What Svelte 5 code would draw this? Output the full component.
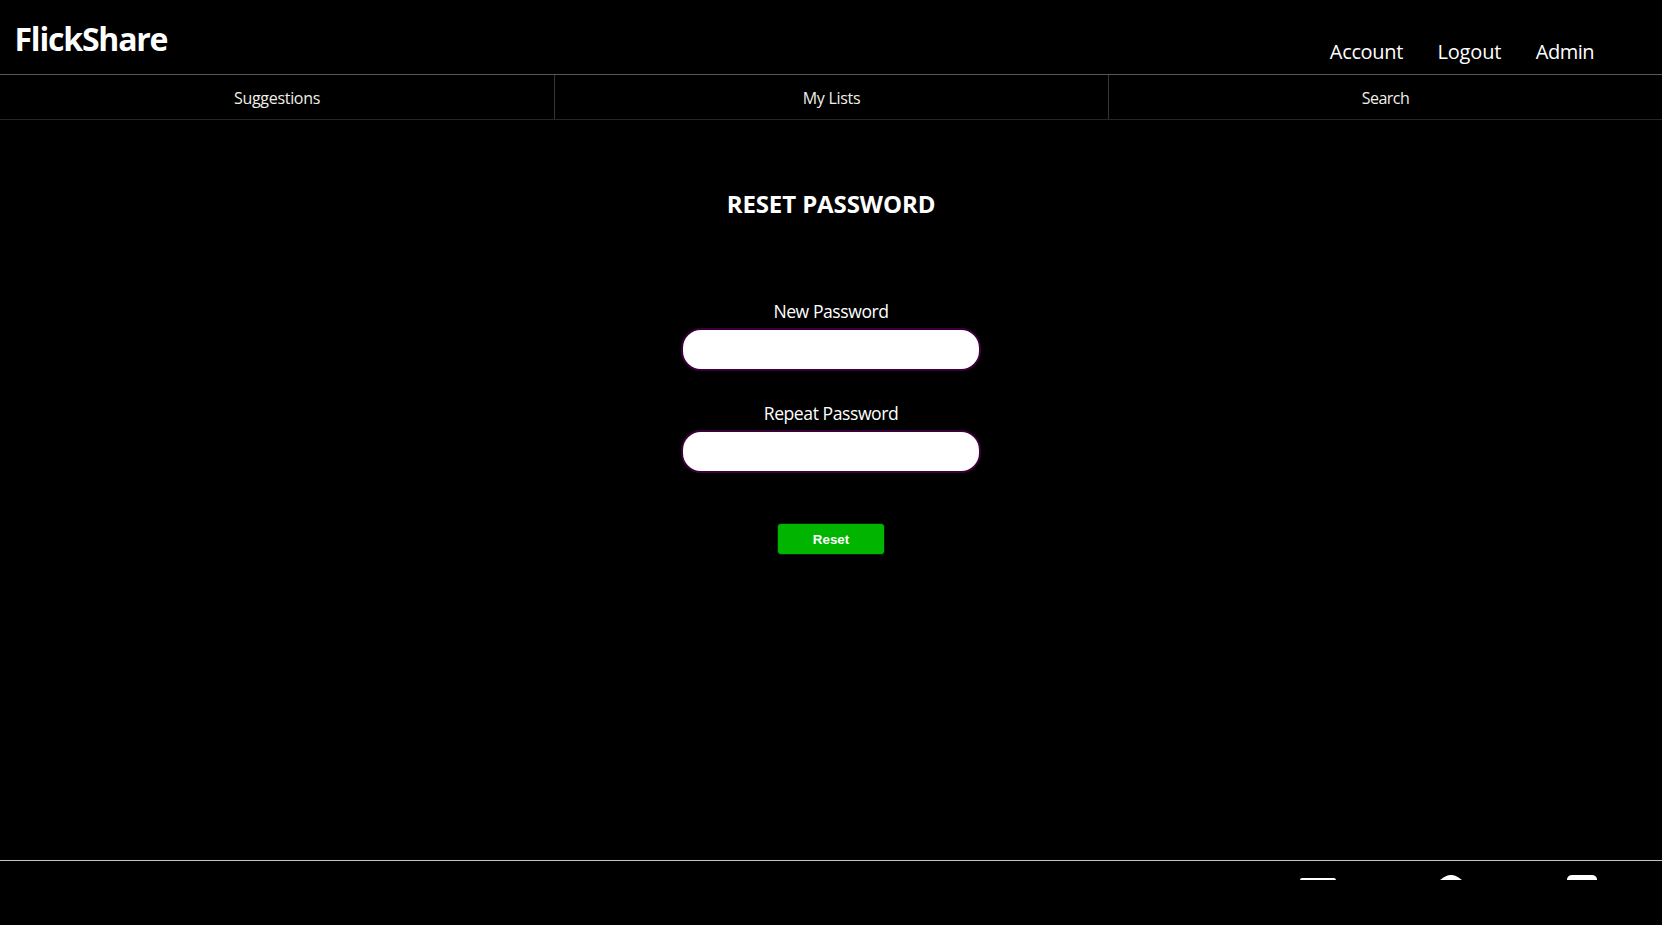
<script>
  const links = [
    { text: 'Account', track: -0.35 },
    { text: 'Logout', track: -0.15 },
    { text: 'Admin', track: -0.5 },
  ];
  const tabs = [
    { text: 'Suggestions', track: -0.3 },
    { text: 'My Lists', track: -0.3 },
    { text: 'Search', track: -0.5 },
  ];
  const fields = [
    { id: 'new-password', label: 'New Password' },
    { id: 'repeat-password', label: 'Repeat Password' },
  ];
</script>

<div class="page">
  <header>
    <h1>FlickShare</h1>
    <nav class="links">
      {#each links as link}
        <a href="#top" style="letter-spacing: {link.track}px">{link.text}</a>
      {/each}
    </nav>
  </header>

  <nav class="tabs">
    {#each tabs as tab}
      <a href="#top" style="letter-spacing: {tab.track}px">{tab.text}</a>
    {/each}
  </nav>

  <main>
    <h2>RESET PASSWORD</h2>
    <form>
      {#each fields as field}
        <div class="field">
          <label for={field.id}>{field.label}</label>
          <input id={field.id} type="password" />
        </div>
      {/each}
      <button type="button">Reset</button>
    </form>
  </main>

  <footer>
    <div class="icons">
      <svg class="mail" width="36" height="5" viewBox="0 0 36 5"><path d="M0 5Q.3 3 2 3H34Q35.700 3 36 5Z" /></svg>
      <svg class="round" width="24" height="5" viewBox="0 0 24 5"><path d="M1 5C6 1 9 0 12 0S18 1 23 5Z" /></svg>
      <svg class="square" width="30" height="5" viewBox="0 0 30 5"><path d="M0 5V4Q1 0 5 0H25Q29 0 30 4V5Z" /></svg>
    </div>
  </footer>
</div>

<style>
  :global(body) {
    background: #000;
  }
  .page {
    box-sizing: border-box;
    height: 925px;
    overflow: hidden;
    display: flex;
    flex-direction: column;
    background: #000;
    color: #fff;
    font-family: "Open Sans", sans-serif;
  }
  header {
    box-sizing: border-box;
    height: 75px;
    display: flex;
    justify-content: space-between;
    border-bottom: 1px solid #575757;
    padding: 0 68px 0 14.500px;
  }
  h1 {
    margin: 15px 0 0;
    font-size: 32px;
    line-height: 48px;
    letter-spacing: -1.2px;
  }
  .links {
    display: flex;
    gap: 34.500px;
    padding-top: 38px;
    font-size: 20px;
    line-height: 28px;
  }
  a {
    color: #fff;
    text-decoration: none;
  }
  .tabs {
    box-sizing: border-box;
    height: 45px;
    display: grid;
    grid-template-columns: repeat(3, 1fr);
    border-bottom: 1px solid #262626;
  }
  .tabs a {
    padding-top: 2px;
    border-left: 1px solid #363636;
    text-align: center;
    font-size: 16px;
    line-height: 42px;
    color: #f0f0e8;
  }
  .tabs a:first-child {
    border-left: 0;
  }
  main {
    flex: 1;
    display: flex;
    flex-direction: column;
    align-items: center;
    padding-top: 68px;
  }
  h2 {
    margin: 0 0 79px;
    font-size: 24px;
    line-height: 32px;
    letter-spacing: -0.1px;
  }
  form {
    display: flex;
    flex-direction: column;
    align-items: center;
  }
  .field {
    display: flex;
    flex-direction: column;
    align-items: center;
    margin-bottom: 30px;
  }
  label {
    margin-bottom: 5px;
    font-size: 17.6px;
    line-height: 24px;
    letter-spacing: -0.45px;
  }
  input {
    box-sizing: border-box;
    width: 300px;
    height: 43px;
    border: 2px solid #3b003b;
    border-radius: 20px;
    background: #fff;
    outline: none;
  }
  button {
    box-sizing: border-box;
    width: 106px;
    height: 30px;
    margin-top: 21px;
    padding: 0;
    border: 0;
    border-radius: 3px;
    box-shadow: 0 0 0 1px rgba(0, 180, 0, 0.2);
    background: #00b400;
    color: #fff;
    font: bold 13.333px "Liberation Sans", sans-serif;
  }
  footer {
    box-sizing: border-box;
    height: 65px;
    border-top: 1px solid #c4c4c4;
    padding: 14px 65px 0 0;
  }
  .icons {
    display: flex;
    justify-content: flex-end;
    height: 5px;
  }
  .icons svg {
    display: block;
    fill: #fff;
  }
  .mail {
    margin-right: 103px;
  }
  .round {
    margin-right: 104px;
  }
</style>
